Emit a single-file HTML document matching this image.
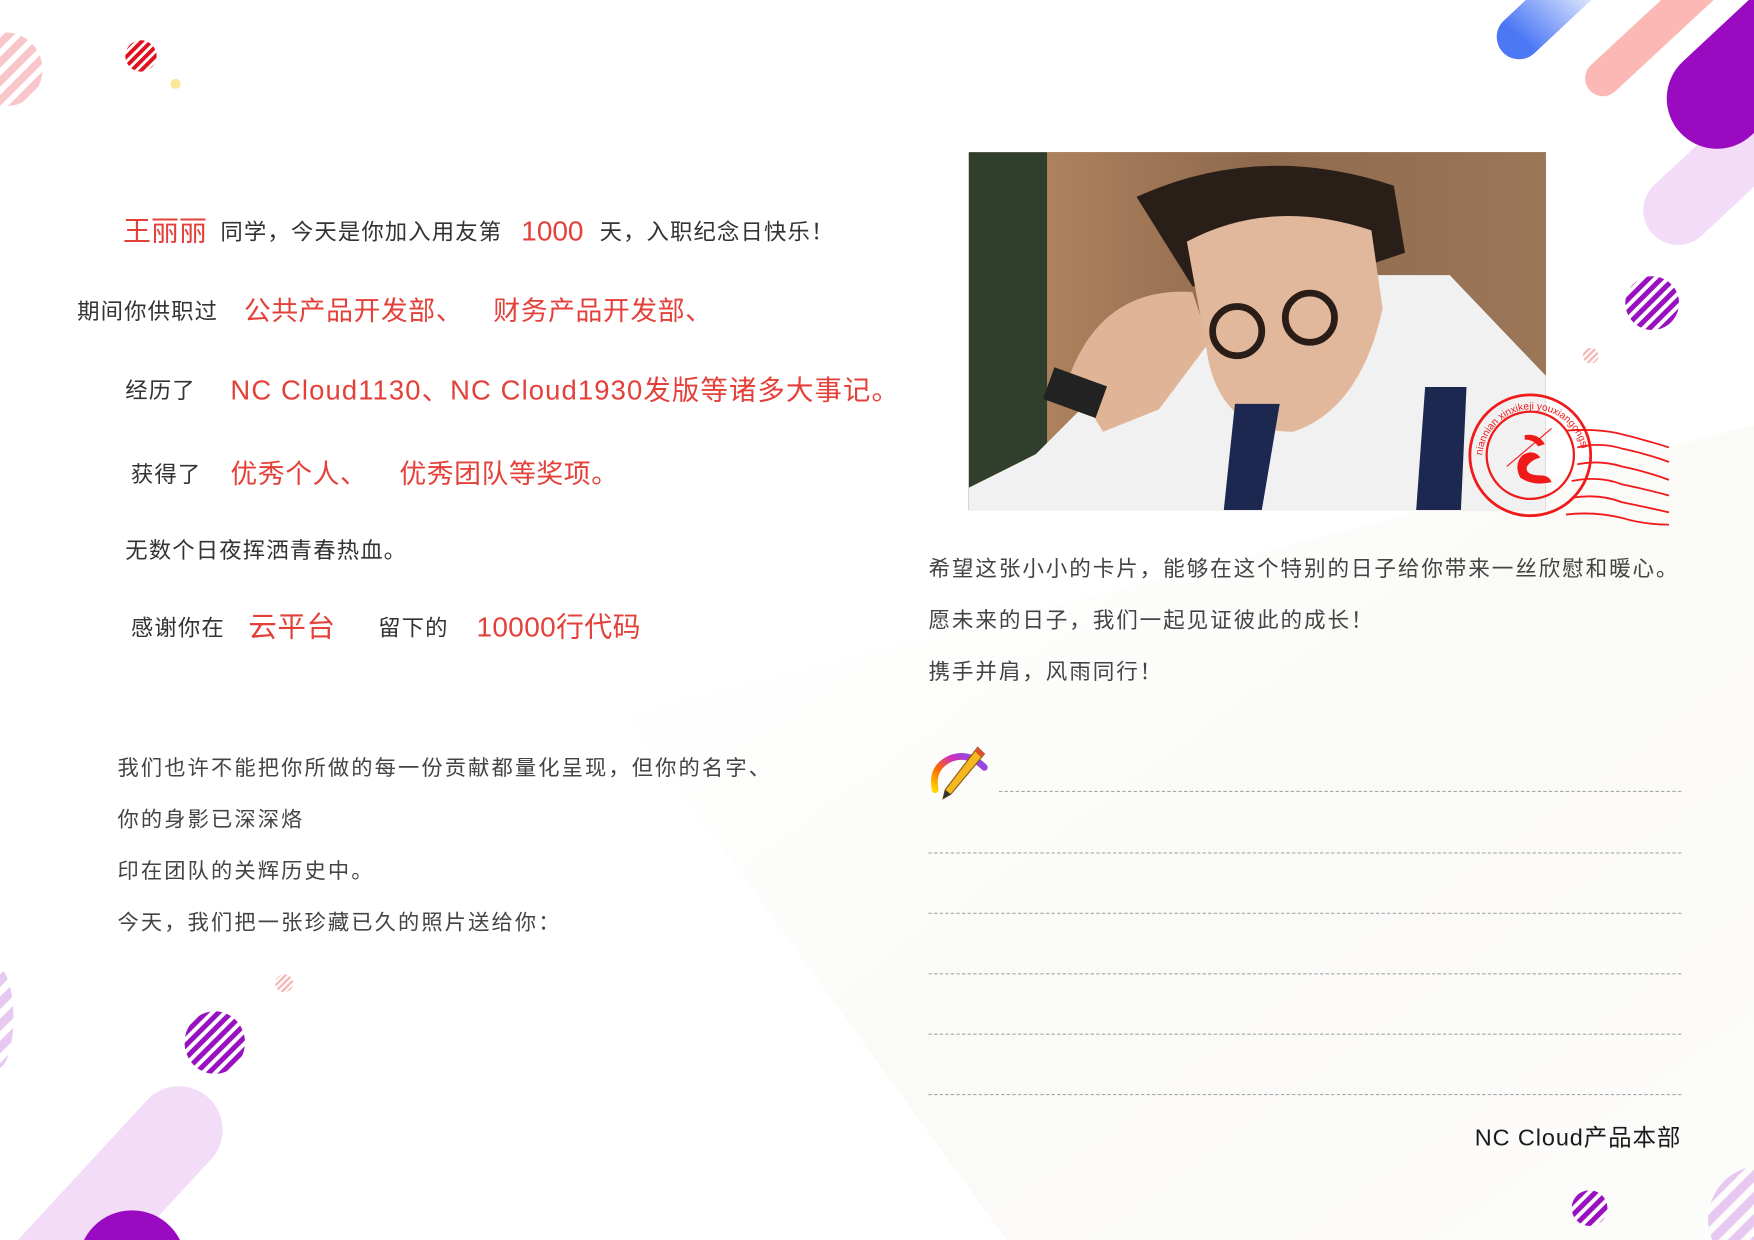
<!DOCTYPE html>
<html><head><meta charset="utf-8">
<style>
html,body{margin:0;padding:0;background:#fff;overflow:hidden;width:1754px;height:1240px;}
body{position:relative;font-family:"Liberation Sans","Noto Sans CJK SC",sans-serif;}
#w{position:absolute;left:0;top:0;width:1568px;height:1109px;transform:scale(1.11862);transform-origin:0 0;overflow:hidden;}
.t{position:absolute;white-space:nowrap;line-height:1;color:#333;}
.r{color:#e4403a;}
.b{font-size:20px;letter-spacing:1px;}
.rr{font-size:24px;letter-spacing:0.5px;}
.p{font-size:19px;color:#444;letter-spacing:1.9px;}
.q{font-size:19.3px;color:#444;letter-spacing:1.7px;}
.d{position:absolute;height:0;border-top:1px dashed #a8a8a8;}
</style></head><body>
<div id="w">
<svg width="1568" height="1109" style="position:absolute;left:0;top:0">
<defs>
<pattern id="sp" width="8" height="8" patternUnits="userSpaceOnUse" patternTransform="rotate(45)"><rect width="4.5" height="8" fill="#9810c0"/></pattern>
<pattern id="sr" width="6" height="6" patternUnits="userSpaceOnUse" patternTransform="rotate(45)"><rect width="3.5" height="6" fill="#e0101e"/></pattern>
<pattern id="spk" width="12" height="12" patternUnits="userSpaceOnUse" patternTransform="rotate(45)"><rect width="7" height="12" fill="#f9c6cc"/></pattern>
<pattern id="spk2" width="4" height="4" patternUnits="userSpaceOnUse" patternTransform="rotate(45)"><rect width="2" height="4" fill="#f7b3b0"/></pattern>
<pattern id="slp" width="14" height="14" patternUnits="userSpaceOnUse" patternTransform="rotate(45)"><rect width="8" height="14" fill="#e6c8f0"/></pattern>
<linearGradient id="gb" x1="0" y1="1" x2="1" y2="0"><stop offset="0" stop-color="#4d78f5"/><stop offset="1" stop-color="#4d78f5" stop-opacity="0"/></linearGradient>
<linearGradient id="bg" x1="0" y1="0" x2="1" y2="1"><stop offset="0" stop-color="#fff" stop-opacity="0"/><stop offset="0.5" stop-color="#f6f5ef"/><stop offset="1" stop-color="#fbfaf7"/></linearGradient>
</defs>
<polygon points="560,640 1568,380 1568,1109 900,1109" fill="url(#bg)" opacity="0.5"/>
<line x1="1358" y1="33" x2="1420" y2="-25" stroke="url(#gb)" stroke-width="40" stroke-linecap="round"/>
<line x1="1433" y1="70" x2="1530" y2="-20" stroke="#fbb8b4" stroke-width="32" stroke-linecap="round"/>
<line x1="1500" y1="188" x2="1600" y2="95" stroke="#f3dcf8" stroke-width="62" stroke-linecap="round"/>
<line x1="1535" y1="88" x2="1640" y2="-10" stroke="#9a0ac0" stroke-width="90" stroke-linecap="round"/>
<circle cx="1477" cy="271" r="24" fill="url(#sp)"/>
<circle cx="1422" cy="318" r="7" fill="url(#spk2)"/>
<circle cx="5" cy="62" r="33" fill="url(#spk)"/>
<circle cx="122" cy="12" r="14" fill="#fbd6dc"/>
<rect x="90" y="0" width="70" height="30" fill="#fff"/>
<circle cx="126" cy="50" r="14" fill="url(#sr)"/>
<circle cx="157" cy="75" r="4.5" fill="#fde69a"/>
<ellipse cx="-2" cy="910" rx="14" ry="45" fill="url(#slp)"/>
<circle cx="254" cy="879" r="8" fill="url(#spk2)"/>
<ellipse cx="192" cy="932" rx="27" ry="28" fill="url(#sp)"/>
<line x1="160" y1="1010" x2="40" y2="1140" stroke="#f3dcf8" stroke-width="78" stroke-linecap="round"/>
<circle cx="118" cy="1130" r="48" fill="#9a0ac0"/>
<circle cx="1421" cy="1080" r="16" fill="url(#sp)"/>
<circle cx="1575" cy="1090" r="48" fill="url(#slp)"/>
</svg>

<span class="t r" style="left:110px;top:195px;font-size:25px">王丽丽</span>
<span class="t b" style="left:197px;top:198px">同学，今天是你加入用友第</span>
<span class="t r" style="left:466px;top:195px;font-size:25px">1000</span>
<span class="t b" style="left:536px;top:198px">天，入职纪念日快乐！</span>

<span class="t b" style="left:69px;top:269px">期间你供职过</span>
<span class="t r rr" style="left:218px;top:267px">公共产品开发部、</span>
<span class="t r rr" style="left:441px;top:267px">财务产品开发部、</span>

<span class="t b" style="left:112px;top:340px">经历了</span>
<span class="t r" style="left:206px;top:338px;font-size:24.5px;letter-spacing:1px">NC Cloud1130、NC Cloud1930发版等诸多大事记。</span>

<span class="t b" style="left:117px;top:415px">获得了</span>
<span class="t r rr" style="left:206px;top:413px">优秀个人、</span>
<span class="t r rr" style="left:357px;top:413px">优秀团队等奖项。</span>

<span class="t b" style="left:112px;top:483px">无数个日夜挥洒青春热血。</span>

<span class="t b" style="left:117px;top:552px">感谢你在</span>
<span class="t r" style="left:222px;top:549px;font-size:25.5px;letter-spacing:0.5px">云平台</span>
<span class="t b" style="left:338px;top:552px">留下的</span>
<span class="t r" style="left:426px;top:549px;font-size:25px;letter-spacing:0.3px">10000行代码</span>

<span class="t p" style="left:105px;top:678px">我们也许不能把你所做的每一份贡献都量化呈现，但你的名字、</span>
<span class="t p" style="left:105px;top:724px">你的身影已深深烙</span>
<span class="t p" style="left:105px;top:770px">印在团队的关辉历史中。</span>
<span class="t p" style="left:105px;top:816px">今天，我们把一张珍藏已久的照片送给你：</span>

<div style="position:absolute;left:866px;top:136px;width:516px;height:320px;overflow:hidden;background:#a0785a">
<svg width="516" height="320">
<defs><linearGradient id="wd" x1="0" x2="1"><stop offset="0" stop-color="#b88a63"/><stop offset="0.5" stop-color="#8f6a4e"/><stop offset="1" stop-color="#9b7657"/></linearGradient></defs>
<rect width="516" height="320" fill="url(#wd)"/>
<rect width="70" height="320" fill="#2f3f2c"/>
<path d="M0,320 L0,300 L60,270 L100,230 L200,160 L330,110 L430,110 L516,200 L516,320Z" fill="#f1f1f1"/>
<path d="M150,40 Q260,-10 380,30 L390,90 L330,110 L200,120 Z" fill="#2a1e19"/>
<path d="M195,80 Q270,40 360,70 L370,140 Q350,230 290,250 Q230,250 215,190 Z" fill="#e2b89c"/>
<path d="M90,200 Q120,120 200,125 L215,170 L170,230 L120,250 Z" fill="#e0b497"/>
<rect x="70" y="200" width="50" height="30" fill="#222" transform="rotate(20 95 215)"/>
<circle cx="240" cy="160" r="22" fill="none" stroke="#2a1c16" stroke-width="6"/>
<circle cx="305" cy="148" r="22" fill="none" stroke="#2a1c16" stroke-width="6"/>
<path d="M238,225 L278,225 L262,320 L228,320Z" fill="#1d2850"/>
<path d="M408,210 L445,210 L440,320 L400,320Z" fill="#1d2850"/>
</svg>
</div>

<svg width="200" height="140" style="position:absolute;left:1305px;top:345px" viewBox="0 0 200 140">
<g fill="none" stroke="#f01a1a" stroke-width="2.5">
<circle cx="63" cy="62" r="54"/>
<circle cx="63" cy="62" r="39" stroke-width="2"/>
<path d="M95,40 Q120,38 140,42 Q165,48 187,55" stroke-width="1.6"/>
<path d="M105,55 Q125,50 145,56 Q165,60 187,68" stroke-width="1.6"/>
<path d="M105,70 Q125,66 145,72 Q165,76 187,84" stroke-width="1.6"/>
<path d="M100,85 Q125,80 145,88 Q165,92 187,98" stroke-width="1.6"/>
<path d="M100,100 Q125,96 145,104 Q165,108 187,113" stroke-width="1.6"/>
<path d="M95,115 Q120,112 145,118 Q165,124 187,124" stroke-width="1.6"/>
<path d="M42,72 L82,38" stroke-width="1"/>
</g>
<path d="M58,44 Q70,42 76,52 L70,54 Q66,48 58,48Z M56,62 Q66,56 72,64 Q64,66 60,72 Q58,80 72,80 Q80,80 82,86 Q66,90 54,82 Q48,70 56,62Z" fill="#f01a1a"/>
<text font-size="9" fill="#f01a1a" font-family="Liberation Sans,sans-serif"><textPath href="#arc">niannian xinxikeji youxiangongsi</textPath></text>
<path id="arc" d="M20,62 A43,43 0 1,1 110,70" fill="none"/>
</svg>

<span class="t q" style="left:830px;top:500px">希望这张小小的卡片，能够在这个特别的日子给你带来一丝欣慰和暖心。</span>
<span class="t q" style="left:830px;top:546px">愿未来的日子，我们一起见证彼此的成长！</span>
<span class="t q" style="left:830px;top:592px">携手并肩，风雨同行！</span>

<svg width="60" height="60" style="position:absolute;left:830px;top:662px" viewBox="0 0 60 60">
<defs><linearGradient id="rb" x1="0" y1="1" x2="1" y2="0"><stop offset="0" stop-color="#ffd200"/><stop offset="0.35" stop-color="#ff6a00"/><stop offset="0.65" stop-color="#d02fb8"/><stop offset="1" stop-color="#6a5cff"/></linearGradient></defs>
<path d="M6,44 Q2,24 20,16 Q36,10 50,24" fill="none" stroke="url(#rb)" stroke-width="6" stroke-linecap="round"/>
<path d="M14,52 L50,52" stroke="url(#rb)" stroke-width="2"/>
<path d="M44,6 L50,12 L20,48 L13,52 L15,44 Z" fill="#f5b820" stroke="#8a5a10" stroke-width="1"/>
<path d="M44,6 L50,12 L47,15 L41,9Z" fill="#e05030"/>
<path d="M15,44 L20,48 L13,52Z" fill="#333"/>
</svg>

<div class="d" style="left:893px;top:707px;width:610px"></div>
<div class="d" style="left:830px;top:762px;width:673px"></div>
<div class="d" style="left:830px;top:816px;width:673px"></div>
<div class="d" style="left:830px;top:870px;width:673px"></div>
<div class="d" style="left:830px;top:924px;width:673px"></div>
<div class="d" style="left:830px;top:978px;width:673px"></div>

<span class="t" style="right:65px;top:1007px;font-size:21px;color:#1a1a1a;letter-spacing:0.8px">NC Cloud产品本部</span>
</div>
</body></html>
